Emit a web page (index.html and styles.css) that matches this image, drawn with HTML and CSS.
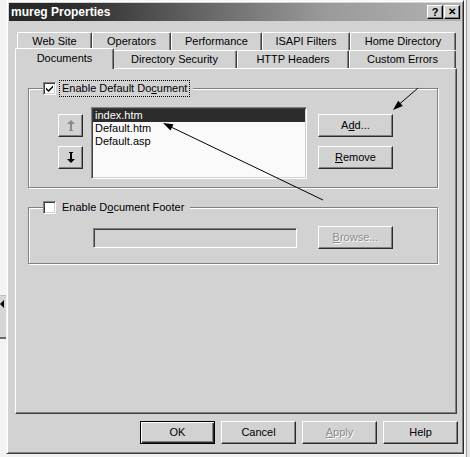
FILE: index.html
```html
<!DOCTYPE html>
<html lang="en">
<head>
  <meta charset="UTF-8">
  <title>mureg Properties</title>
  <link rel="stylesheet" href="styles.css">
</head>
<body>

  <div class="behind-left"><span class="scroll-arrow"></span></div>
  <div class="behind-right"></div>

  <div class="window">
    <div class="titlebar">
      <span class="title">mureg Properties</span>
      <span class="tbtn">?</span>
      <span class="tbtn close">&#x2715;</span>
    </div>

    <div class="client">
      <div class="tabs">
        <div class="tabrow">
          <div class="tab" style="width:75px">Web Site</div>
          <div class="tab" style="width:79px">Operators</div>
          <div class="tab" style="width:91px">Performance</div>
          <div class="tab" style="width:88px">ISAPI Filters</div>
          <div class="tab" style="width:106px">Home Directory</div>
        </div>
        <div class="tabrow">
          <div class="tab sel" style="width:99px">Documents</div>
          <div class="tab" style="width:125px">Directory Security</div>
          <div class="tab" style="width:112px">HTTP Headers</div>
          <div class="tab" style="width:107px">Custom Errors</div>
        </div>
      </div>

      <div class="panel">
        <div class="group g1">
          <div class="legend">
            <span class="check on">
              <svg width="9" height="9" viewBox="0 0 9 9"><path d="M1 3.5 L3.5 6 L8 1.5 L8 3.5 L3.5 8 L1 5.5 Z" fill="#000"/></svg>
            </span>
            <span class="lbl focus">Enable Default Do<u>c</u>ument</span>
          </div>
          <div class="g1-body">
            <div class="updown">
              <div class="btn arrow off">
                <svg width="8" height="11" viewBox="0 0 8 11"><path d="M4 0 L8 4 L5 4 L5 10 L6 10 L6 11 L2 11 L2 10 L3 10 L3 4 L0 4 Z" fill="#8a8a8a"/></svg>
              </div>
              <div class="btn arrow">
                <svg width="8" height="11" viewBox="0 0 8 11"><path d="M4 11 L8 7 L5 7 L5 1 L6 1 L6 0 L2 0 L2 1 L3 1 L3 7 L0 7 Z" fill="#000"/></svg>
              </div>
            </div>
            <div class="listbox">
              <div class="item sel">index.htm</div>
              <div class="item">Default.htm</div>
              <div class="item">Default.asp</div>
            </div>
            <div class="side">
              <div class="btn">A<u>d</u>d...</div>
              <div class="btn"><u>R</u>emove</div>
            </div>
          </div>
        </div>

        <div class="group g2">
          <div class="legend">
            <span class="check"></span>
            <span class="lbl">Enable D<u>o</u>cument Footer</span>
          </div>
          <div class="g2-body">
            <div class="textbox"></div>
            <div class="btn off"><u>B</u>rowse...</div>
          </div>
        </div>
      </div>

      <div class="actions">
        <div class="btn default">OK</div>
        <div class="btn">Cancel</div>
        <div class="btn off"><u>A</u>pply</div>
        <div class="btn">Help</div>
      </div>
    </div>
  </div>

  <!-- hand drawn arrows on top of the dialog -->
  <svg class="notes" width="470" height="457" viewBox="0 0 470 457">
    <line x1="323" y1="200" x2="170" y2="126.5" stroke="#000" stroke-width="1"/>
    <polygon points="163,123 173.5,124.2 170.5,130.5" fill="#000"/>
    <line x1="418" y1="88" x2="399" y2="104.5" stroke="#000" stroke-width="1"/>
    <polygon points="393,110 402.8,106 398.2,100.8" fill="#000"/>
  </svg>

</body>
</html>
```

FILE: styles.css
```css
html {
  background: #f3f3f3;
}

body {
  margin: 0;
  width: 470px;
  height: 457px;
  position: relative;
  overflow: hidden;
  font-family: "Liberation Sans", Arial, sans-serif;
  font-size: 11px;
  color: #000;
}

/* bits of other windows peeking out */
.behind-left {
  position: absolute;
  left: 0;
  top: 295px;
  width: 6px;
  height: 41px;
  background: #d6d6d6;
  border-top: 1px solid #bdbdbd;
  border-bottom: 2px solid #6a6a6a;
}
.scroll-arrow {
  position: absolute;
  left: 0;
  top: 4px;
  border-right: 4px solid #000;
  border-top: 4px solid transparent;
  border-bottom: 4px solid transparent;
}
.behind-right {
  position: absolute;
  left: 466px;
  top: 0;
  width: 4px;
  height: 457px;
  border-left: 1px solid #9a9a9a;
  background: #e4e4e4;
}

.window {
  position: absolute;
  left: 6px;
  top: 0;
  width: 458px;
  height: 454px;
  box-sizing: border-box;
  padding: 2px;
  background: #d2d2d2;
  border: 1px solid;
  border-color: #f6f6f6 #2a2a2a #404040 #f6f6f6;
  box-shadow: inset 1px 1px 0 #fff, inset -1px -1px 0 #808080;
}

.titlebar {
  height: 18px;
  display: flex;
  align-items: center;
  background: linear-gradient(to right, #262626 0%, #2e2e2e 15%, #6a6a6a 45%, #9a9a9a 70%, #b2b2b2 100%);
}
.title {
  flex: 1;
  padding-left: 2px;
  color: #fff;
  font-weight: bold;
  font-size: 12px;
  line-height: 18px;
}
.tbtn {
  width: 16px;
  height: 14px;
  box-sizing: border-box;
  margin-right: 1px;
  background: #d2d2d2;
  border: 1px solid;
  border-color: #fff #000 #000 #fff;
  box-shadow: inset -1px -1px 0 #808080;
  font-weight: bold;
  font-size: 11px;
  line-height: 12px;
  text-align: center;
}
.tbtn.close {
  font-size: 10px;
  margin-right: 1px;
}

.client {
  padding: 11px 4px 0 6px;
}

/* tab strip */
.tabs {
  padding-left: 2px;
}
.tabrow {
  display: flex;
  height: 18px;
  align-items: flex-start;
}
.tab {
  height: 18px;
  box-sizing: border-box;
  border-top: 1px solid #fff;
  border-left: 1px solid #fff;
  border-right: 1px solid #404040;
  box-shadow: inset -1px 0 0 #808080;
  border-radius: 2px 2px 0 0;
  text-align: center;
  line-height: 17px;
  white-space: nowrap;
}
.tab.sel {
  position: relative;
  z-index: 1;
  height: 21px;
  margin: -2px -2px 0 -2px;
  background: #d2d2d2;
  line-height: 19px;
}

.panel {
  height: 346px;
  box-sizing: border-box;
  border: 1px solid;
  border-color: #fff #404040 #404040 #fff;
  box-shadow: inset -1px -1px 0 #808080;
  padding: 19px 0 0 12px;
}

/* group boxes */
.group {
  position: relative;
  width: 410px;
  box-sizing: border-box;
  border: 1px solid #808080;
  box-shadow: inset 1px 1px 0 #fff, 1px 1px 0 #fff;
}
.g1 {
  height: 100px;
}
.g2 {
  height: 57px;
  margin-top: 19px;
}
.legend {
  position: absolute;
  left: 14px;
  top: -8px;
  height: 15px;
  display: flex;
  align-items: center;
  gap: 3px;
  padding-right: 3px;
  background: #d2d2d2;
}
.check {
  width: 13px;
  height: 13px;
  box-sizing: border-box;
  background: #fff;
  border: 1px solid;
  border-color: #808080 #fff #fff #808080;
  box-shadow: inset 1px 1px 0 #404040, inset -1px -1px 0 #d2d2d2;
  display: flex;
  align-items: center;
  justify-content: center;
}
.lbl {
  padding: 1px 2px;
  border: 1px dotted transparent;
  line-height: 13px;
}
.lbl.focus {
  border-color: #000;
}

.g1-body {
  display: flex;
  padding: 18px 0 0 29px;
}
.updown {
  display: flex;
  flex-direction: column;
  gap: 9px;
  margin-top: 7px;
}
.listbox {
  width: 216px;
  height: 72px;
  box-sizing: border-box;
  margin-left: 8px;
  padding-top: 1px;
  background: #fafafa;
  border: 1px solid;
  border-color: #808080 #fff #fff #808080;
  box-shadow: inset 1px 1px 0 #404040, inset -1px -1px 0 #d2d2d2;
}
.item {
  height: 13px;
  line-height: 13px;
  margin: 0 1px 0 1px;
  padding-left: 2px;
}
.item.sel {
  background: #2c2c2c;
  color: #fff;
}
.side {
  display: flex;
  flex-direction: column;
  gap: 9px;
  margin: 7px 0 0 11px;
}

.g2-body {
  display: flex;
  align-items: center;
  padding: 18px 0 0 64px;
}
.textbox {
  width: 204px;
  height: 20px;
  box-sizing: border-box;
  margin-right: 21px;
  border: 1px solid;
  border-color: #808080 #fff #fff #808080;
  box-shadow: inset 1px 1px 0 #404040, inset -1px -1px 0 #d2d2d2;
}

/* push buttons */
.btn {
  width: 75px;
  height: 23px;
  box-sizing: border-box;
  background: #d2d2d2;
  border: 1px solid;
  border-color: #fff #2a2a2a #2a2a2a #fff;
  box-shadow: inset -1px -1px 0 #808080;
  text-align: center;
  line-height: 21px;
  white-space: nowrap;
}
.btn.arrow {
  width: 25px;
  display: flex;
  align-items: center;
  justify-content: center;
}
.btn.off {
  color: #8a8a8a;
  text-shadow: 1px 1px 0 #fff;
}
.btn.default {
  border-color: #000;
  box-shadow: inset 1px 1px 0 #fff, inset -1px -1px 0 #2a2a2a, inset -2px -2px 0 #808080;
}

.actions {
  display: flex;
  justify-content: flex-end;
  gap: 6px;
  margin: 7px -1px 0 0;
}

.notes {
  position: absolute;
  left: 0;
  top: 0;
  pointer-events: none;
}
```
